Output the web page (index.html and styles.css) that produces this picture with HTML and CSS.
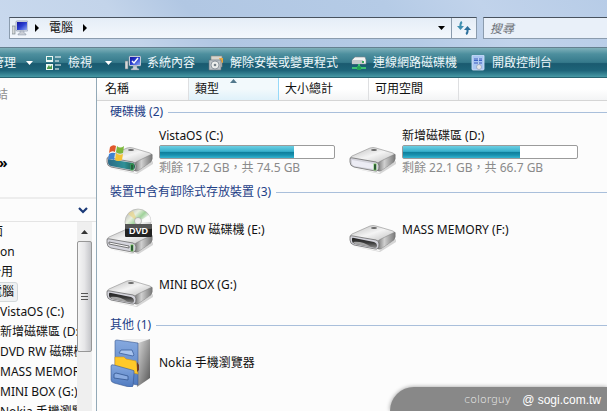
FILE: index.html
```html
<!DOCTYPE html>
<html lang="zh-Hant">
<head>
    <meta charset="UTF-8">
    <meta name="viewport" content="width=device-width, initial-scale=1.0">
    <title>電腦</title>
    <link rel="stylesheet" href="styles.css">
</head>
<body>
    <!-- shared shapes -->
    <svg class="defs" width="0" height="0" aria-hidden="true">
        <defs>
            <linearGradient id="topFace" x1="0" y1="0" x2="1" y2="1">
                <stop offset="0" stop-color="#b9b9b9"/>
                <stop offset=".5" stop-color="#f4f4f4"/>
                <stop offset="1" stop-color="#bdbdbd"/>
            </linearGradient>
            <linearGradient id="sideFace" x1="0" y1="0" x2="1" y2="0">
                <stop offset="0" stop-color="#6e6e6e"/>
                <stop offset=".4" stop-color="#d0d0d0"/>
                <stop offset="1" stop-color="#777"/>
            </linearGradient>
            <linearGradient id="glassFront" x1="0" y1="0" x2="1" y2="0">
                <stop offset="0" stop-color="#2b6a86"/>
                <stop offset=".6" stop-color="#2f9097"/>
                <stop offset="1" stop-color="#1f5a4a"/>
            </linearGradient>
            <linearGradient id="slot" x1="0" y1="0" x2="0" y2="1">
                <stop offset="0" stop-color="#222"/>
                <stop offset=".5" stop-color="#3c3c3c"/>
                <stop offset="1" stop-color="#8c8c8c"/>
            </linearGradient>
            <linearGradient id="disc" x1="0" y1="0" x2="1" y2="1">
                <stop offset="0" stop-color="#a9a9a9"/>
                <stop offset=".3" stop-color="#e9efe0"/>
                <stop offset=".45" stop-color="#9fd29a"/>
                <stop offset=".6" stop-color="#f2f2f2"/>
                <stop offset="1" stop-color="#9c9c9c"/>
            </linearGradient>
            <linearGradient id="cabSide" x1="0" y1="0" x2="1" y2="1">
                <stop offset="0" stop-color="#dcdcdc"/>
                <stop offset="1" stop-color="#555"/>
            </linearGradient>
            <linearGradient id="cabFront" x1="0" y1="0" x2="0" y2="1">
                <stop offset="0" stop-color="#86a9df"/>
                <stop offset="1" stop-color="#4f7ac0"/>
            </linearGradient>
            <linearGradient id="screen" x1="0" y1="0" x2="1" y2="1">
                <stop offset="0" stop-color="#1414a0"/>
                <stop offset=".5" stop-color="#2a3fd0"/>
                <stop offset="1" stop-color="#8fa8f4"/>
            </linearGradient>
            <g id="drive">
                <path d="M3 40 L30 45 L47 33 L47 36 L31 46 Z" fill="#bbb" opacity=".6"/>
                <path d="M1 31 Q1 29 3 28 L21 20 Q24 19 27 20 L44 25 Q46 26 46 28 L31 35 L4 31 Z" fill="url(#topFace)" stroke="#8d8d8d" stroke-width=".6"/>
                <path d="M29 36 Q29 34 32 33 L46 26 Q47 31 45 34 L32 43 Q28 44 28 41 Z" fill="url(#sideFace)" stroke="#777" stroke-width=".5"/>
                <path d="M1 31 Q1 29 4 30 L27 34 Q30 35 30 38 Q30 44 26 43 L5 39 Q1 38 1 34 Z" fill="#d4d4dc" stroke="#707070" stroke-width=".8"/>
                <ellipse cx="25" cy="22" rx="3" ry="1" fill="#666"/>
            </g>
            <g id="openDrive">
                <use href="#drive"/>
                <path d="M3 33 Q3 31 5 32 L25 36 Q28 37 28 40 Q28 42 26 42 L6 38 Q3 37 3 35 Z" fill="url(#slot)"/>
                <path d="M4 36 Q14 35 22 41 L6 38 Z" fill="#a5a5a5"/>
            </g>
            <g id="monitor">
                <rect x="0" y="6" width="3" height="8" fill="#d5d8d8" stroke="#6d7a80" stroke-width=".6"/>
                <rect x="4" y="1" width="12" height="10" rx="1" fill="#e3e7ee" stroke="#75849a" stroke-width=".6"/>
                <rect x="5" y="2" width="10" height="8" fill="url(#screen)"/>
                <path d="M8 11 H12 V13 L14 14 V15 H6 V14 L8 13 Z" fill="#c9ced6" stroke="#75849a" stroke-width=".4"/>
            </g>
        </defs>
    </svg>

    <div class="window">
        <div class="navbar">
            <div class="address">
                <svg class="icon" viewBox="0 0 16 16"><use href="#monitor"/></svg>
                <svg class="crumb-arrow" viewBox="0 0 4 8"><path d="M0 0 L4 4 L0 8 Z"/></svg>
                <button class="crumb">電腦</button>
                <svg class="crumb-arrow" viewBox="0 0 4 8"><path d="M0 0 L4 4 L0 8 Z"/></svg>
                <button class="history" aria-label="先前的位置"><svg width="7" height="4" viewBox="0 0 7 4"><path d="M0 0 H7 L3.500 4 Z"/></svg></button>
                <button class="refresh" aria-label="重新整理">
                    <svg width="14" height="14" viewBox="0 0 14 14">
                        <path d="M5 1 Q3 2 3.500 6" fill="none" stroke="#3f8fb0" stroke-width="2"/>
                        <path d="M0 5 H7 L3.500 9 Z" fill="#3f8fb0"/>
                        <path d="M9 13 Q11 12 10.500 8" fill="none" stroke="#2c6f9c" stroke-width="2"/>
                        <path d="M7 9 H14 L10.500 5 Z" fill="#2c6f9c"/>
                    </svg>
                </button>
            </div>
            <input class="search" type="text" placeholder="搜尋" aria-label="搜尋">
        </div>

        <div class="toolbar">
            <button class="tool tool-menu">管理 <svg class="tool-arrow" viewBox="0 0 7 4"><path d="M0 0 H7 L3.500 4 Z"/></svg></button>
            <button class="tool">
                <svg class="icon" viewBox="0 0 16 16">
                    <path d="M0 1 H7 V7 H0 Z M0 9 H7 V15 H0 Z" fill="#eef8f4"/>
                    <path d="M1 2 H6 V5 H1 Z" fill="#3b8d92"/>
                    <path d="M1 13 L3 10 L4 12 L6 10 V14 H1 Z" fill="#4c9b49"/>
                    <path d="M9 2 H15 M9 6 H13 M9 10 H15 M9 14 H13" stroke="#fff" stroke-width="1"/>
                </svg>
                檢視
            </button>
            <button class="tool" aria-label="檢視選項"><svg class="tool-arrow" viewBox="0 0 7 4"><path d="M0 0 H7 L3.500 4 Z"/></svg></button>
            <button class="tool">
                <svg class="icon" viewBox="0 0 16 16"><use href="#monitor"/><path d="M7 6 L9 8 L13 3" fill="none" stroke="#fff" stroke-width="1.500"/></svg>
                系統內容
            </button>
            <button class="tool">
                <svg class="icon" viewBox="0 0 16 16">
                    <path d="M3 1 H14 V12 H3 Z" fill="#d9d5cc" stroke="#8f8a80" stroke-width=".6"/>
                    <path d="M11 3 H15 V8 L13 7 Z" fill="#e8a63c"/>
                    <path d="M1 5 H13 V15 H1 Z" fill="#bcc2c6" stroke="#67717a" stroke-width=".6"/>
                    <circle cx="7" cy="10" r="4" fill="#eceeed" stroke="#7d8790" stroke-width=".8"/>
                    <circle cx="7" cy="10" r="1.300" fill="#758089"/>
                </svg>
                解除安裝或變更程式
            </button>
            <button class="tool">
                <svg class="icon" viewBox="0 0 16 16">
                    <path d="M1 5 L4 2 H14 L15 5 V9 H1 Z" fill="#f2f3f2" stroke="#7b8589" stroke-width=".6"/>
                    <path d="M1 5 H12 V9 H1 Z" fill="#c4cacc"/>
                    <rect x="11" y="6" width="2" height="2" fill="#3aa65c"/>
                    <path d="M8 9 V12 M1 13 H15" stroke="#3cc274" stroke-width="2"/>
                    <rect x="6" y="11" width="4" height="4" fill="#22a157"/>
                </svg>
                連線網路磁碟機
            </button>
            <button class="tool">
                <svg class="icon" viewBox="0 0 16 16">
                    <rect x="2" y="0" width="12" height="15" rx="1" fill="#a9c6f2" stroke="#d8e6fb" stroke-width=".8"/>
                    <path d="M4 3 H8 V6 H4 Z M9 3 H12 V6 H9 Z M4 7 H8 V9 H4 Z M9 7 H12 V9 H9 Z" fill="#3d63c4"/>
                    <path d="M4 4 H12 M4 8 H12" stroke="#dce8fa" stroke-width=".7"/>
                    <circle cx="9" cy="12" r="2.500" fill="#e2e4e8" stroke="#8593ad" stroke-width=".6"/>
                </svg>
                開啟控制台
            </button>
        </div>

        <div class="main">
            <nav class="sidebar">
                <div class="links">
                    <h2 class="links-title">連結</h2>
                    <a class="more" href="#">&raquo;</a>
                </div>
                <button class="folders" aria-label="資料夾"><svg width="10" height="7" viewBox="0 0 10 7"><path d="M1 1 L5 5 L9 1" fill="none" stroke="#1b3a78" stroke-width="2.200"/></svg></button>
                <div class="tree-pane">
                    <ul class="tree">
                        <li>桌面</li>
                        <li class="level-2">on</li>
                        <li class="level-1">公用</li>
                        <li class="level-1"><span class="selected">電腦</span></li>
                        <li class="level-2">VistaOS (C:)</li>
                        <li class="level-2">新增磁碟區 (D:)</li>
                        <li class="level-2">DVD RW 磁碟機 (E:)</li>
                        <li class="level-2">MASS MEMORY (F:)</li>
                        <li class="level-2">MINI BOX (G:)</li>
                        <li class="level-2">Nokia 手機瀏覽器</li>
                    </ul>
                    <div class="scrollbar">
                        <button class="scroll-up" aria-label="向上捲動"><svg width="7" height="4" viewBox="0 0 7 4"><path d="M0 4 H7 L3.500 0 Z" fill="#333"/></svg></button>
                        <div class="thumb"><i></i><i></i><i></i></div>
                    </div>
                </div>
            </nav>

            <div class="content">
                <div class="columns">
                    <button class="column">名稱</button>
                    <button class="column sorted">類型<svg class="sort-mark" width="7" height="4" viewBox="0 0 7 4"><path d="M0 4 L3.500 0 L7 4 Z" fill="#52788c"/></svg></button>
                    <button class="column">大小總計</button>
                    <button class="column">可用空間</button>
                </div>

                <section class="group drives">
                    <h2 class="group-title">硬碟機 (2)</h2>
                    <div class="items">
                        <div class="item">
                            <svg class="item-icon" viewBox="0 0 48 48">
                                <use href="#drive"/>
                                <path d="M2 31 L27 35 Q29 36 29 38 Q29 42 26 42 L5 38 Q2 37 2 34 Z" fill="url(#glassFront)"/>
                                <rect x="25" y="36" width="2" height="6" fill="#123" stroke="#4bd352" stroke-width=".7"/>
                                <path d="M4 19 Q7 16 10 18 L9 24 Q6 22 3 25 Z" fill="#e0582b"/>
                                <path d="M11 18 Q14 21 18 18 L17 25 Q13 27 10 24 Z" fill="#7cb83b"/>
                                <path d="M3 26 Q6 24 9 25 L8 32 Q5 30 2 32 Z" fill="#3f82d2"/>
                                <path d="M10 25 Q13 28 17 26 L16 32 Q12 34 9 32 Z" fill="#f4c235"/>
                            </svg>
                            <div class="item-text">
                                <div class="name">VistaOS (C:)</div>
                                <div class="bar"><div class="used" style="width: 77%"></div></div>
                                <div class="free">剩餘 17.2 GB，共 74.5 GB</div>
                            </div>
                        </div>
                        <div class="item">
                            <svg class="item-icon" viewBox="0 0 48 48">
                                <use href="#drive"/>
                                <path d="M3 32 L25 36 V41 L5 38 Q3 37 3 35 Z" fill="#ececf4"/>
                                <rect x="25" y="36" width="2" height="6" fill="#123" stroke="#62c43f" stroke-width=".7"/>
                            </svg>
                            <div class="item-text">
                                <div class="name">新增磁碟區 (D:)</div>
                                <div class="bar"><div class="used" style="width: 67%"></div></div>
                                <div class="free">剩餘 22.1 GB，共 66.7 GB</div>
                            </div>
                        </div>
                    </div>
                </section>

                <section class="group">
                    <h2 class="group-title">裝置中含有卸除式存放裝置 (3)</h2>
                    <div class="items">
                        <div class="item">
                            <svg class="item-icon" viewBox="0 0 48 48">
                                <g transform="translate(0 3)">
                                    <use href="#drive"/>
                                    <path d="M3 33 L23 37 V39 L3 35 Z" fill="#f7f7f7" stroke="#444" stroke-width=".7"/>
                                    <rect x="25" y="36" width="2" height="6" fill="#123" stroke="#62c43f" stroke-width=".7"/>
                                </g>
                                <circle cx="32" cy="16" r="13" fill="url(#disc)" stroke="#aaa" stroke-width=".6"/>
                                <path d="M32 16 L22 8 A13 13 0 0 1 27 5 Z" fill="#e9d58a" opacity=".7"/>
                                <path d="M32 16 L43 9 A13 13 0 0 1 45 16 Z" fill="#fff" opacity=".8"/>
                                <circle cx="32" cy="15" r="3.500" fill="#eee" stroke="#999" stroke-width=".6"/>
                                <rect x="19" y="18" width="27" height="13" rx="1" fill="#222"/>
                                <rect x="19" y="18" width="27" height="5" rx="1" fill="#555"/>
                                <text class="dvd" x="32.500" y="28" text-anchor="middle">DVD</text>
                            </svg>
                            <div class="item-text"><div class="name">DVD RW 磁碟機 (E:)</div></div>
                        </div>
                        <div class="item">
                            <svg class="item-icon" viewBox="0 0 48 48"><use href="#openDrive"/></svg>
                            <div class="item-text"><div class="name">MASS MEMORY (F:)</div></div>
                        </div>
                        <div class="item">
                            <svg class="item-icon" viewBox="0 0 48 48"><use href="#openDrive"/></svg>
                            <div class="item-text"><div class="name">MINI BOX (G:)</div></div>
                        </div>
                    </div>
                </section>

                <section class="group">
                    <h2 class="group-title">其他 (1)</h2>
                    <div class="items">
                        <div class="item">
                            <svg class="item-icon" viewBox="0 0 48 48">
                                <path d="M9 2 L21 0 L44 0 L32 4 Z" fill="#eee"/>
                                <path d="M32 4 L44 0 V39 L31 48 Z" fill="url(#cabSide)"/>
                                <path d="M9 2 Q9 1 11 1 L32 4 V46 L9 42 Z" fill="url(#cabFront)" stroke="#39588f" stroke-width=".6"/>
                                <path d="M13 14 L15 11 H26 L28 16 L27 17 Z" fill="#a9c5ef" stroke="#3d609c" stroke-width=".8"/>
                                <path d="M9 18 L18 18 L20 20 L30 22 L32 35 L9 30 Z" fill="#ffc928" stroke="#d39718" stroke-width=".6"/>
                                <path d="M31 23 L33 26 V31 L31 33 Z" fill="#713c25"/>
                                <path d="M5 27 Q5 25 8 26 L26 31 Q29 31 28 34 L27 47 Q26 49 23 48 L8 44 Q5 43 5 41 Z" fill="url(#cabFront)" stroke="#39588f" stroke-width=".6"/>
                                <path d="M8 35 L10 34 L22 37 V41 L8 39 Z" fill="#89abe1" stroke="#33578f" stroke-width=".8"/>
                            </svg>
                            <div class="item-text"><div class="name">Nokia 手機瀏覽器</div></div>
                        </div>
                    </div>
                </section>
            </div>
        </div>

        <div class="watermark"><span class="author">colorguy</span><span>@ sogi.com.tw</span></div>
    </div>
</body>
</html>
```

FILE: styles.css
```css
* {
    box-sizing: border-box;
}
body {
    margin: 0;
    font-family: "Noto Sans", "Noto Sans CJK TC", sans-serif;
    font-size: 12px;
    line-height: 20px;
    color: #111;
}
button {
    margin: 0;
    padding: 0;
    border: none;
    background: none;
    font: inherit;
    color: inherit;
    white-space: nowrap;
}
h2 {
    margin: 0;
    font-size: 12px;
    font-weight: normal;
}
svg {
    display: block;
    flex: none;
}
.defs {
    position: absolute;
}
.icon {
    width: 16px;
    height: 16px;
}
.window {
    display: flex;
    flex-direction: column;
    height: 100vh;
    position: relative;
    overflow: hidden;
    background: #fcfcfc;
}

/* address bar */
.navbar {
    display: flex;
    gap: 6px;
    flex: none;
    padding: 17px 0 8px 9px;
    background: linear-gradient(50deg, #c9d9ee 0%, #c3d4ea 22%, #b1c7e3 34%, #b5cbe6 65%, #c1d3eb 80%, #b7cce7 100%);
    border-bottom: 1px solid #64808f;
}
.address {
    display: flex;
    align-items: center;
    flex: 1 1 468px;
    height: 22px;
    padding-left: 2px;
    background: linear-gradient(#e5edf7, #f3f7fc);
    border: 1px solid #8b9cae;
    border-top-color: #48525e;
}
.crumb-arrow {
    width: 4px;
    height: 8px;
    margin: 0 7px;
}
.crumb {
    padding: 0 3px;
}
.history {
    display: flex;
    justify-content: center;
    align-items: center;
    width: 20px;
    height: 20px;
    margin-left: auto;
}
.refresh {
    display: flex;
    justify-content: center;
    align-items: center;
    width: 25px;
    height: 20px;
    border-left: 1px solid #8b9cae;
}
.search {
    flex: 1 1 124px;
    min-width: 0;
    height: 22px;
    padding: 0 6px;
    border: 1px solid #8b9cae;
    border-top-color: #48525e;
    border-right: none;
    background: #e9f0f9;
    font: italic 12px "Noto Sans", "Noto Sans CJK TC", sans-serif;
}
.search::placeholder {
    color: #6d7177;
}

/* command bar */
.toolbar {
    display: flex;
    align-items: center;
    gap: 13px;
    flex: none;
    height: 30px;
    margin-left: -8px;
    background: linear-gradient(#7fb0ba 0%, #4d8f9e 20%, #35798b 48%, #1a5a70 52%, #1e6479 75%, #4698a4 96%, #123f4d 100%);
    color: #eef8fb;
}
.tool {
    display: flex;
    align-items: center;
    gap: 6px;
}
.tool-menu {
    gap: 10px;
}
.tool-arrow {
    width: 7px;
    height: 4px;
    fill: #fff;
}

.main {
    display: flex;
    flex: 1;
    min-height: 0;
}

/* folder pane */
.sidebar {
    display: flex;
    flex-direction: column;
    flex: none;
    width: 118px;
    margin-left: -21px;
    border-right: 1px solid #93a9b7;
}
.links {
    flex: none;
    height: 121px;
    padding: 7px 5px 0;
    border-bottom: 2px solid #ededed;
}
.links-title {
    color: #8c8c8c;
}
.more {
    display: block;
    margin: 48px 0 0 15px;
    color: #000;
    font-size: 14px;
    font-weight: bold;
    text-decoration: none;
}
.folders {
    display: flex;
    justify-content: flex-end;
    align-items: center;
    flex: none;
    height: 23px;
    padding-right: 8px;
    border-bottom: 1px solid #e4e4e4;
}
.tree-pane {
    display: flex;
    flex: 1;
    min-height: 0;
    padding-right: 4px;
}
.tree {
    flex: 1;
    min-width: 0;
    margin: 0;
    padding: 0;
    overflow: hidden;
    list-style: none;
    white-space: nowrap;
}
.level-1 {
    padding-left: 10px;
}
.level-2 {
    padding-left: 21px;
}
.selected {
    display: inline-block;
    padding-right: 3px;
    border: 1px solid #d3d8da;
    border-radius: 3px;
    background: #eff1f2;
    line-height: 18px;
}
.scrollbar {
    flex: none;
    width: 15px;
    background: #efefef;
}
.scroll-up {
    display: flex;
    justify-content: center;
    align-items: center;
    width: 15px;
    height: 19px;
}
.thumb {
    display: flex;
    flex-direction: column;
    justify-content: center;
    align-items: center;
    gap: 2px;
    height: 111px;
    border: 1px solid #979797;
    border-radius: 2px;
    background: linear-gradient(90deg, #f5f5f5, #e6e6e8 50%, #c4c5c9);
}
.thumb i {
    width: 7px;
    height: 1px;
    background: #555;
}

/* file list */
.content {
    flex: 1;
    min-width: 0;
}
.columns {
    display: flex;
    height: 23px;
    padding-left: 2px;
    border-bottom: 1px solid #d5d5d5;
    background: linear-gradient(#fff 50%, #f3f4f5);
}
.column {
    position: relative;
    width: 90px;
    padding-left: 6px;
    border-right: 1px solid #dedfe1;
    text-align: left;
}
.sorted {
    background: linear-gradient(#f2f9fc 50%, #dff1fa);
    border-right-color: #96d9f9;
}
.sort-mark {
    position: absolute;
    top: 1px;
    left: 41px;
}
.group {
    padding: 1px 0 2px 9px;
}
.group-title {
    display: flex;
    align-items: center;
    gap: 5px;
    margin-left: 4px;
    color: #1e3f87;
}
.group-title::after {
    content: "";
    flex: 1;
    height: 1px;
    background: #a9bfdb;
}
.items {
    display: grid;
    grid-template-columns: repeat(auto-fill, 243px);
    grid-auto-rows: 55px;
}
.drives {
    padding-bottom: 0;
}
.drives .items {
    grid-auto-rows: 59px;
}
.item {
    display: flex;
    align-items: center;
    gap: 5px;
}
.item-icon {
    width: 48px;
    height: 48px;
}
.name {
    line-height: 18px;
}
.bar {
    width: 176px;
    height: 14px;
    border: 1px solid #9b9b9b;
    border-radius: 2px;
    background: #fff;
}
.used {
    height: 100%;
    background: linear-gradient(#6ccfe3 0%, #38b0cc 45%, #0f7f9c 52%, #1790ae 75%, #35b4d0 100%);
}
.free {
    color: #8a8a8a;
    line-height: 18px;
}
.dvd {
    font: bold 9px "Liberation Sans", sans-serif;
    fill: #fff;
}

/* credit tag over the corner */
.watermark {
    position: absolute;
    right: 0;
    bottom: 0;
    display: flex;
    gap: 11px;
    padding: 3px 6px 1px 74px;
    border-top-left-radius: 24px;
    background: #888;
    box-shadow: 0 0 4px #999;
    color: #fff;
    font-family: "Liberation Sans", sans-serif;
}
.author {
    color: #f2f2f2;
    font-family: "DejaVu Sans", sans-serif;
    font-size: 11px;
    font-weight: 200;
}
```
